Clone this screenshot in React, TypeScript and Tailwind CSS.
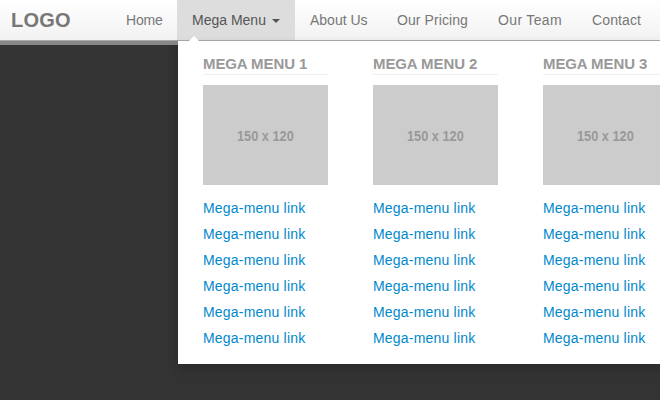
import React from 'react';

const navItems = [
  { label: 'Home', className: 'w-[66px] pl-[15px] text-[#777777] tracking-[-0.2px]' },
  { label: 'Mega Menu', className: 'w-[118px] pl-[15px] bg-[#dddddd] text-[#555555]' },
  { label: 'About Us', className: 'w-[87px] pl-[15px] text-[#777777]' },
  { label: 'Our Pricing', className: 'w-[101px] pl-[15px] text-[#777777] tracking-[0.08px]' },
  { label: 'Our Team', className: 'w-[94px] pl-[15px] text-[#777777] tracking-[0.35px]' },
  { label: 'Contact', className: 'w-[83px] pl-[15px] text-[#777777] tracking-[0.12px]' },
];
const columns = ['Mega Menu 1', 'Mega Menu 2', 'Mega Menu 3'];
const links = [1, 2, 3, 4, 5, 6];

function MegaColumn({ title }: { title: string }) {
  return (
    <div className="w-[125px] shrink-0">
      <h3 className="h-[24px] border-b border-[#eeeeee] text-[15px] font-bold uppercase leading-[25px] tracking-[-0.1px] text-[#999999]">
        {title}
      </h3>
      <div className="mt-[10px] flex h-[100px] items-center justify-center bg-[#cccccc] pt-[3px] text-[15px] font-bold text-[#999999]">
        <span className="inline-block scale-x-[0.85] whitespace-nowrap">150 x 120</span>
      </div>
      <ul className="mt-[10px]">
        {links.map((n) => (
          <li key={n} className="h-[26px] text-[14px] leading-[26px] tracking-[0.2px] text-[#0088cc]">
            Mega-menu link
          </li>
        ))}
      </ul>
    </div>
  );
}

export default function App() {
  return (
    <div className="relative h-[400px] w-[660px] overflow-hidden bg-[#333333] font-['Liberation_Sans',Arial,sans-serif]">
      <nav className="flex h-[41px] items-stretch border-b border-[#aaaaaa] bg-gradient-to-b from-white to-[#f2f2f2] shadow-[0_4px_0_#888888]">
        <div className="w-[111px] shrink-0 pl-[11px] text-[20px] font-bold leading-[40px] tracking-[0.2px] text-[#777777]">LOGO</div>
        {navItems.map((item) => (
          <div key={item.label} className={`flex h-[40px] shrink-0 items-center whitespace-nowrap text-[14px] ${item.className}`}>
            {item.label}
            {item.label === 'Mega Menu' && (
              <span className="ml-[6px] mt-[1px] h-0 w-0 border-x-[4px] border-t-[4px] border-x-transparent border-t-[#555555]" />
            )}
          </div>
        ))}
      </nav>

      {/* dropdown panel */}
      <div className="absolute left-[178px] top-[41px] flex h-[323px] w-[482px] gap-[45px] overflow-hidden bg-white pl-[25px] pt-[10px] shadow-[0_5px_10px_rgba(0,0,0,0.2)]">
        {columns.map((title) => (
          <MegaColumn key={title} title={title} />
        ))}
      </div>
      <svg className="absolute left-[186px] top-[36px]" width="16" height="6" viewBox="0 0 16 6">
        <path d="M2 6 L8 0 L14 6 Z" fill="#ffffff" />
      </svg>
    </div>
  );
}
